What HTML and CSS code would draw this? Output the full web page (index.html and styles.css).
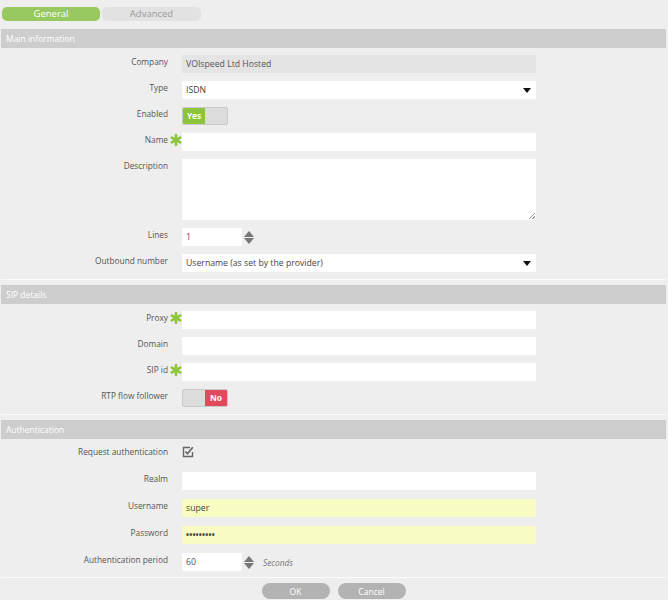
FILE: index.html
```html
<!DOCTYPE html>
<html lang="en">
<head>
  <meta charset="UTF-8" />
  <title>Trunk settings</title>
  <link rel="stylesheet" href="styles.css">
</head>
<body>
  <div class="page">
    <div class="tabs">
      <span class="tab tab-active">General</span>
      <span class="tab">Advanced</span>
    </div>

    <div class="section">
      <div class="section-head">Main information</div>
      <div class="section-body">
        <div class="row">
          <label class="lbl">Company</label><span class="req"></span>
          <div class="field field-ro">VOIspeed Ltd Hosted</div>
        </div>
        <div class="row">
          <label class="lbl">Type</label><span class="req"></span>
          <div class="field select">ISDN<span class="caret"></span></div>
        </div>
        <div class="row">
          <label class="lbl">Enabled</label><span class="req"></span>
          <div class="toggle"><span class="tg-yes">Yes</span><span class="tg-off"></span></div>
        </div>
        <div class="row">
          <label class="lbl">Name</label>
          <span class="req"><svg viewBox="0 0 12 12" width="12" height="12"><g stroke="#8cc43c" stroke-width="2.6" stroke-linecap="round"><line x1="6" y1="1.2" x2="6" y2="10.8"/><line x1="1.8" y1="3.6" x2="10.2" y2="8.4"/><line x1="1.8" y1="8.4" x2="10.2" y2="3.6"/></g></svg></span>
          <div class="field"></div>
        </div>
        <div class="row">
          <label class="lbl">Description</label><span class="req"></span>
          <div class="field textarea"><span class="grip"></span></div>
        </div>
        <div class="row">
          <label class="lbl">Lines</label><span class="req"></span>
          <div class="num-wrap">
            <div class="field num">1</div>
            <div class="spin"><span class="up"></span><span class="down"></span></div>
          </div>
        </div>
        <div class="row">
          <label class="lbl">Outbound number</label><span class="req"></span>
          <div class="field select">Username (as set by the provider)<span class="caret"></span></div>
        </div>
      </div>
    </div>

    <div class="section">
      <div class="section-head">SIP details</div>
      <div class="section-body">
        <div class="row">
          <label class="lbl">Proxy</label>
          <span class="req"><svg viewBox="0 0 12 12" width="12" height="12"><g stroke="#8cc43c" stroke-width="2.6" stroke-linecap="round"><line x1="6" y1="1.2" x2="6" y2="10.8"/><line x1="1.8" y1="3.6" x2="10.2" y2="8.4"/><line x1="1.8" y1="8.4" x2="10.2" y2="3.6"/></g></svg></span>
          <div class="field"></div>
        </div>
        <div class="row">
          <label class="lbl">Domain</label><span class="req"></span>
          <div class="field"></div>
        </div>
        <div class="row">
          <label class="lbl">SIP id</label>
          <span class="req"><svg viewBox="0 0 12 12" width="12" height="12"><g stroke="#8cc43c" stroke-width="2.6" stroke-linecap="round"><line x1="6" y1="1.2" x2="6" y2="10.8"/><line x1="1.8" y1="3.6" x2="10.2" y2="8.4"/><line x1="1.8" y1="8.4" x2="10.2" y2="3.6"/></g></svg></span>
          <div class="field"></div>
        </div>
        <div class="row">
          <label class="lbl">RTP flow follower</label><span class="req"></span>
          <div class="toggle"><span class="tg-off"></span><span class="tg-no">No</span></div>
        </div>
      </div>
    </div>

    <div class="section">
      <div class="section-head">Authentication</div>
      <div class="section-body auth">
        <div class="row">
          <label class="lbl">Request authentication</label><span class="req"></span>
          <div class="check">
            <svg viewBox="0 0 12 12" width="12" height="12"><path d="M8 1.5H1.5v9h9V6" fill="none" stroke="#666" stroke-width="1.4"/><path d="M3.5 5.5l2 2.2L10.8 1.2" fill="none" stroke="#666" stroke-width="1.8"/></svg>
          </div>
        </div>
        <div class="row">
          <label class="lbl">Realm</label><span class="req"></span>
          <div class="field"></div>
        </div>
        <div class="row">
          <label class="lbl">Username</label><span class="req"></span>
          <div class="field field-fill">super</div>
        </div>
        <div class="row">
          <label class="lbl">Password</label><span class="req"></span>
          <div class="field field-fill dots">&#8226;&#8226;&#8226;&#8226;&#8226;&#8226;&#8226;&#8226;&#8226;</div>
        </div>
        <div class="row">
          <label class="lbl">Authentication period</label><span class="req"></span>
          <div class="num-wrap">
            <div class="field num">60</div>
            <div class="spin"><span class="up"></span><span class="down"></span></div>
            <span class="unit">Seconds</span>
          </div>
        </div>
      </div>
    </div>

    <div class="actions">
      <button class="btn">OK</button>
      <button class="btn">Cancel</button>
    </div>
  </div>
</body>
</html>
```

FILE: styles.css
```css
* { box-sizing: border-box; margin: 0; padding: 0; }
body {
  font-family: "Open Sans", "DejaVu Sans", sans-serif;
  font-size: 8.3px; color: #555;
  background: #eeeeee;
}
.page { padding: 7px 2px 0 1px; }

.tabs { display: flex; gap: 2px; padding-left: 1px; margin-bottom: 8px; }
.tab {
  width: 99px; height: 14px; line-height: 14px;
  text-align: center; font-size: 9.5px; color: #9a9a9a;
  background: #e2e2e2; border-radius: 5px;
}
.tab-active { background: #97c960; color: #fff; width: 98px; }

.section { border-bottom: 1px solid #fafafa; margin-bottom: 5px; }
.section-head {
  height: 19px; line-height: 19px; padding-left: 5px;
  background: #cdcdcd; color: #fff; font-size: 8.5px;
}
.section-body {
  display: flex; flex-direction: column; gap: 8px;
  padding: 7px 0 7px;
}
.section-body.auth { gap: 9px; padding: 6px 0 6px; }

.row { display: grid; grid-template-columns: 167px 14px 354px auto; align-items: start; }
.lbl { text-align: right; line-height: 12px; padding-top: 1px; white-space: nowrap; }
.req { display: flex; justify-content: center; padding: 1px 0 0 2px; }

.field {
  height: 18px; line-height: 18px; padding: 0 4px;
  background: #fff; color: #444; position: relative; font-size: 8.7px;
}
.field-ro { background: #e4e4e4; color: #555; }
.field-fill { background: #f9fcc2; }
.dots { font-size: 8px; font-weight: bold; letter-spacing: 0.2px; }
.select .caret {
  position: absolute; right: 5px; top: 7px;
  border-left: 4.5px solid transparent; border-right: 4.5px solid transparent;
  border-top: 5px solid #111;
}
.textarea { height: 61px; }
.grip {
  position: absolute; right: 1px; bottom: 1px; width: 6px; height: 6px;
  background: linear-gradient(135deg, transparent 45%, #999 45%, #999 55%, transparent 55%, transparent 75%, #999 75%, #999 85%, transparent 85%);
}

.num-wrap { display: flex; align-items: center; }
.num { width: 60px; color: #555; }
.spin {
  width: 14px; height: 18px; display: flex; flex-direction: column;
  justify-content: center; align-items: center; gap: 1px;
}
.spin .up {
  border-left: 5px solid transparent; border-right: 5px solid transparent;
  border-bottom: 6px solid #777;
}
.spin .down {
  border-left: 5px solid transparent; border-right: 5px solid transparent;
  border-top: 6px solid #777;
}
.unit { margin-left: 7px; font-style: italic; color: #777; }

.toggle {
  width: 46px; height: 18px; display: flex;
  border: 1px solid #c9c9c9; border-radius: 2px; overflow: hidden;
  background: #dcdcdc;
}
.tg-yes, .tg-no {
  width: 22px; color: #fff; font-weight: bold; font-size: 8.3px;
  text-align: center; line-height: 16px;
}
.tg-yes { background: #8cc43c; }
.tg-no { background: #e04a5a; }
.tg-off { flex: 1; }

.check { height: 18px; padding-top: 1px; }

.actions { display: flex; justify-content: center; gap: 8px; padding-top: 0; }
.btn {
  width: 68px; height: 16px; border: none; border-radius: 8px;
  background: #b3b3b3; color: #fff; font-family: inherit; font-size: 8.5px;
}
```
